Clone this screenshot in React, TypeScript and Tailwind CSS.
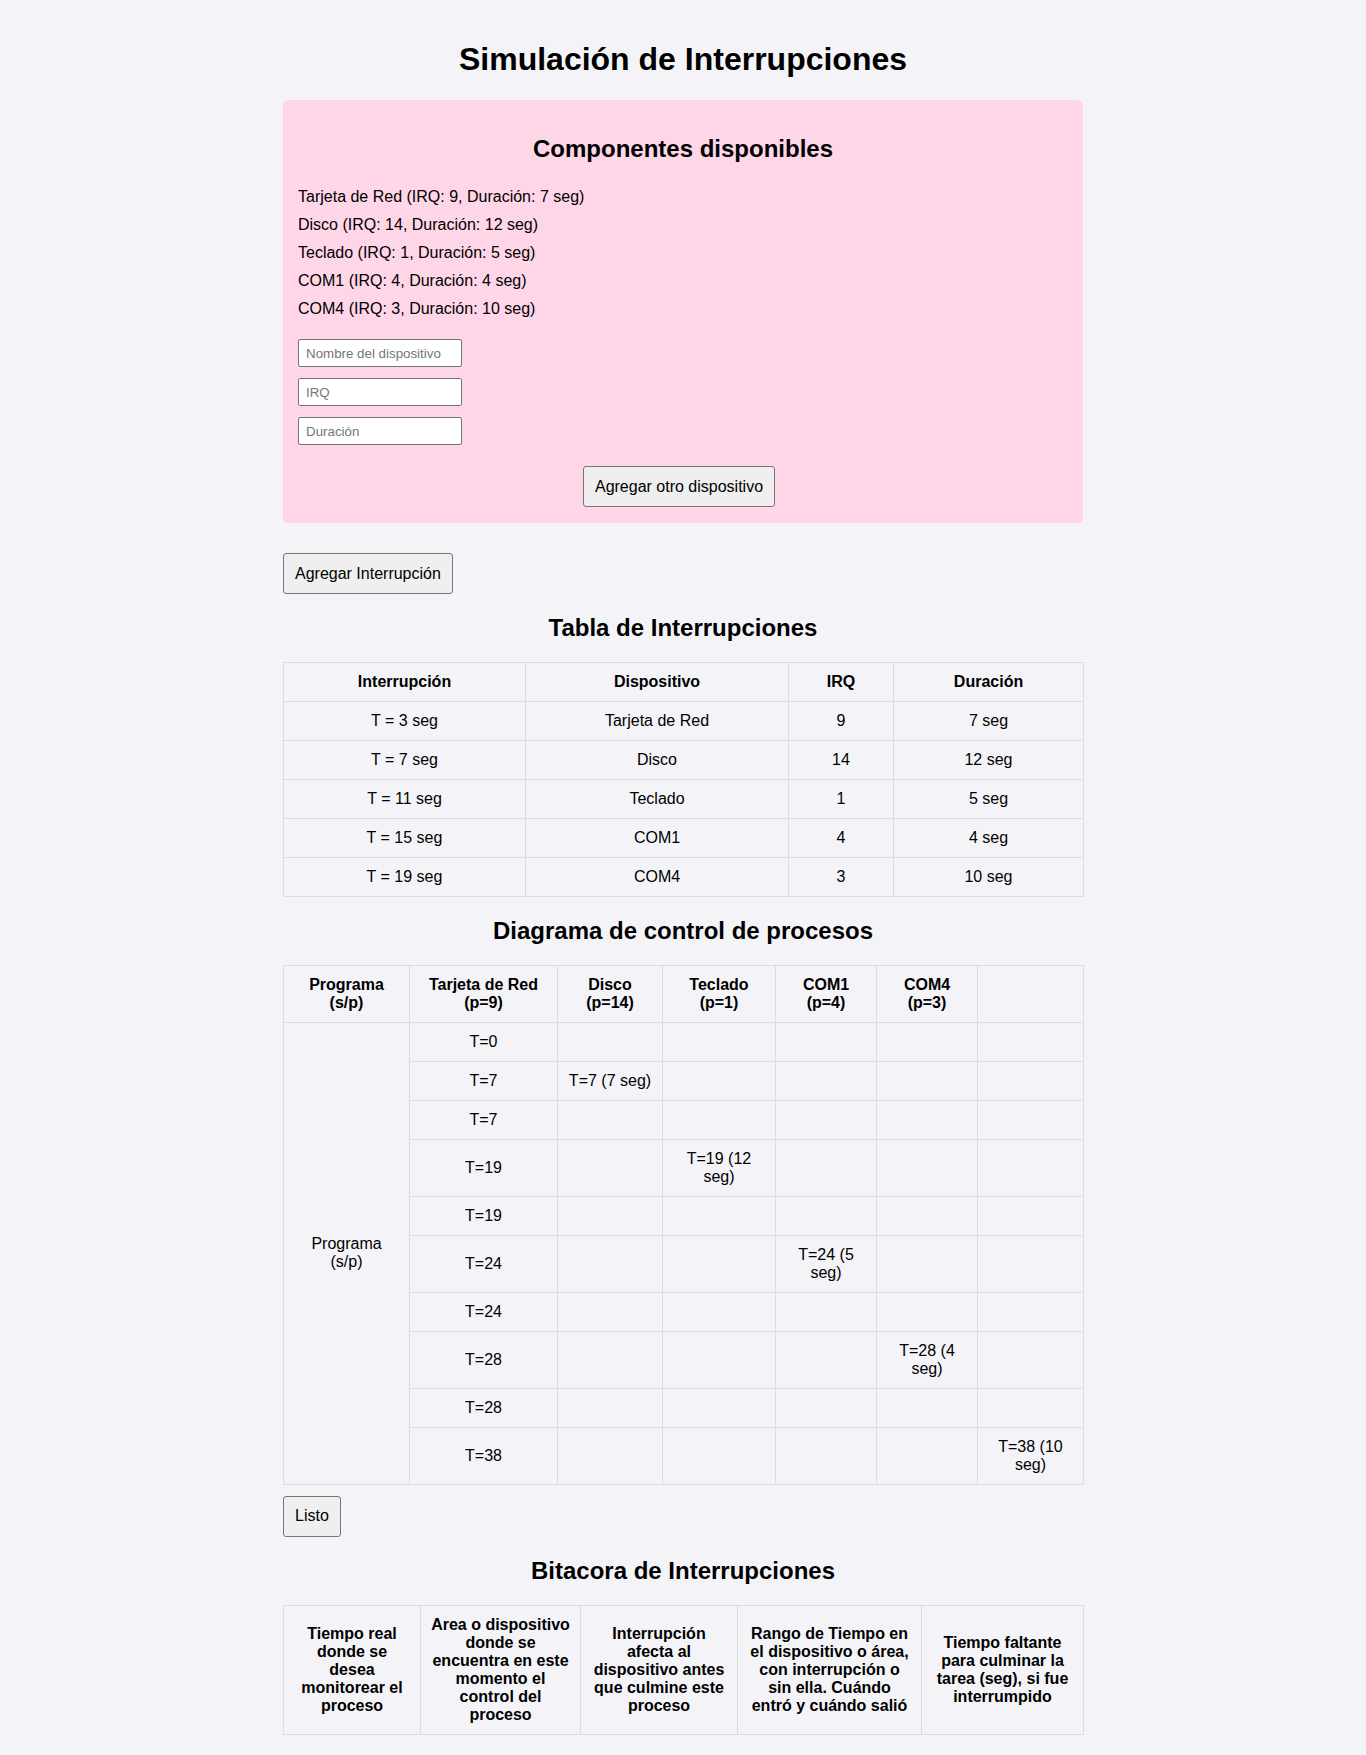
import React from 'react';

const devices = [
  'Tarjeta de Red (IRQ: 9, Duración: 7 seg)',
  'Disco (IRQ: 14, Duración: 12 seg)',
  'Teclado (IRQ: 1, Duración: 5 seg)',
  'COM1 (IRQ: 4, Duración: 4 seg)',
  'COM4 (IRQ: 3, Duración: 10 seg)',
];

const interrupts = [
  ['T = 3 seg', 'Tarjeta de Red', '9', '7 seg'],
  ['T = 7 seg', 'Disco', '14', '12 seg'],
  ['T = 11 seg', 'Teclado', '1', '5 seg'],
  ['T = 15 seg', 'COM1', '4', '4 seg'],
  ['T = 19 seg', 'COM4', '3', '10 seg'],
];

// [tiempo, columna ocupada (0 = ninguna), texto]
const diagramRows: [string, number, string][] = [
  ['T=0', 0, ''],
  ['T=7', 1, 'T=7 (7 seg)'],
  ['T=7', 0, ''],
  ['T=19', 2, 'T=19 (12 seg)'],
  ['T=19', 0, ''],
  ['T=24', 3, 'T=24 (5 seg)'],
  ['T=24', 0, ''],
  ['T=28', 4, 'T=28 (4 seg)'],
  ['T=28', 0, ''],
  ['T=38', 5, 'T=38 (10 seg)'],
];

const cell = 'border border-[#dddddd] p-[10px] text-center';

const Button = ({ children }: { children: React.ReactNode }) => (
  <button className="h-[41px] rounded-[3px] border border-[#767676] bg-[#efefef] px-[11px] text-[16px] text-black">
    {children}
  </button>
);

const Title = ({ children }: { children: React.ReactNode }) => (
  <h2 className="my-[19.92px] text-center text-[24px] font-bold">{children}</h2>
);

export default function App() {
  return (
    <div className="min-h-screen bg-[#f4f4f8] p-[20px] font-['Liberation_Sans',Arial,sans-serif] text-[16px] leading-[normal] text-black">
      <div className="mx-auto max-w-[800px]">
        <h1 className="my-[21.44px] text-center text-[32px] font-bold">Simulación de Interrupciones</h1>

        <div className="rounded-[5px] bg-[#ffd6e8] px-[15px] pt-[15px] pb-[16px]">
          <Title>Componentes disponibles</Title>
          <div className="mb-[16.6px]">
            {devices.map((d) => (
              <div key={d} className="py-[5px]">
                {d}
              </div>
            ))}
          </div>
          <div className="flex flex-col gap-[11px]">
            {['Nombre del dispositivo', 'IRQ', 'Duración'].map((p) => (
              <input
                key={p}
                type="text"
                placeholder={p}
                className="h-[28px] w-[164px] rounded-[2px] border border-[#767676] bg-white px-[7px] text-[13.33px] placeholder:text-[#757575]"
              />
            ))}
          </div>
          <div className="mt-[21px] flex justify-center pr-[8px]">
            <Button>Agregar otro dispositivo</Button>
          </div>
        </div>

        <div className="mt-[30px]">
          <Button>Agregar Interrupción</Button>
        </div>

        <Title>Tabla de Interrupciones</Title>
        <table className="w-full table-fixed border-collapse">
          <thead>
            <tr>
              <th className={`${cell} w-[242px]`}>Interrupción</th>
              <th className={`${cell} w-[263px]`}>Dispositivo</th>
              <th className={`${cell} w-[105px]`}>IRQ</th>
              <th className={`${cell} w-[190px]`}>Duración</th>
            </tr>
          </thead>
          <tbody>
            {interrupts.map((row) => (
              <tr key={row[0]}>
                {row.map((v, i) => (
                  <td key={i} className={cell}>
                    {v}
                  </td>
                ))}
              </tr>
            ))}
          </tbody>
        </table>

        <Title>Diagrama de control de procesos</Title>
        <table className="w-full table-fixed border-collapse">
          <thead>
            <tr>
              <th className={`${cell} w-[126px]`}>Programa (s/p)</th>
              <th className={`${cell} w-[148px]`}>Tarjeta de Red (p=9)</th>
              <th className={`${cell} w-[105px]`}>Disco (p=14)</th>
              <th className={`${cell} w-[113px]`}>Teclado (p=1)</th>
              <th className={`${cell} w-[101px]`}>COM1 (p=4)</th>
              <th className={`${cell} w-[101px]`}>COM4 (p=3)</th>
              <th className={`${cell} w-[106px]`}></th>
            </tr>
          </thead>
          <tbody>
            {diagramRows.map(([t, col, text], idx) => (
              <tr key={idx}>
                {idx === 0 && (
                  <td rowSpan={diagramRows.length} className={cell}>
                    Programa (s/p)
                  </td>
                )}
                <td className={cell}>{t}</td>
                {[1, 2, 3, 4, 5].map((c) => (
                  <td key={c} className={cell}>
                    {c === col ? text : ''}
                  </td>
                ))}
              </tr>
            ))}
          </tbody>
        </table>

        <div className="mt-[11px]">
          <Button>Listo</Button>
        </div>

        <Title>Bitacora de Interrupciones</Title>
        <table className="w-full table-fixed border-collapse">
          <thead>
            <tr>
              <th className={`${cell} w-[137px]`}>Tiempo real donde se desea monitorear el proceso</th>
              <th className={`${cell} w-[160px]`}>Area o dispositivo donde se encuentra en este momento el control del proceso</th>
              <th className={`${cell} w-[157px]`}>Interrupción afecta al dispositivo antes que culmine este proceso</th>
              <th className={`${cell} w-[184px]`}>Rango de Tiempo en el dispositivo o área, con interrupción o sin ella. Cuándo entró y cuándo salió</th>
              <th className={`${cell} w-[162px]`}>Tiempo faltante para culminar la tarea (seg), si fue interrumpido</th>
            </tr>
          </thead>
        </table>
      </div>
    </div>
  );
}
